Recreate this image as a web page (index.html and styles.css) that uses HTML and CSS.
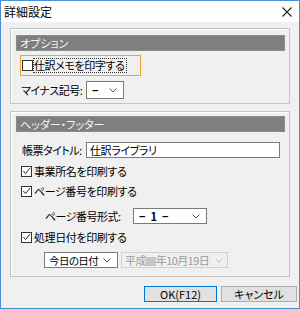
FILE: index.html
```html
<!DOCTYPE html>
<html lang="ja">

<head>
    <title>詳細設定</title>
    <meta charset="utf-8">
    <link rel="stylesheet" href="styles.css">
</head>

<body>
<div class="window">
    <div class="titlebar">
        <span class="title">詳細設定</span>
        <svg class="close" width="10" height="10" viewBox="0 0 10 10">
            <path d="M0.5 0.5 L9.5 9.5 M9.5 0.5 L0.5 9.5" stroke="#222" stroke-width="1.1" fill="none"/>
        </svg>
    </div>

    <div class="client">
        <!-- オプション -->
        <div class="group group-option">
            <div class="bar">オプション</div>
            <div class="focus-row">
                <span class="check"></span>
                <span class="focus-text">仕訳メモを印字する</span>
            </div>
            <div class="row row-minus">
                <span class="label lbl-minus">マイナス記号:</span>
                <div class="select sel-minus">
                    <span class="dash">−</span>
                    <svg class="chev" width="8" height="5" viewBox="0 0 8 5"><path d="M0.5 0.5 L4 4 L7.5 0.5" stroke="#555" fill="none"/></svg>
                </div>
            </div>
        </div>

        <!-- ヘッダー・フッター -->
        <div class="group group-header">
            <div class="bar">ヘッダー・フッター</div>
            <div class="row row-title">
                <span class="label lbl-title">帳票タイトル:</span>
                <div class="textbox">仕訳ライブラリ</div>
            </div>
            <div class="check-row first">
                <span class="check checked"><svg width="10" height="10" viewBox="0 0 10 10"><path d="M1.5 5 L4 7.8 L8.8 1.8" stroke="#222" stroke-width="1.1" fill="none"/></svg></span>
                <span>事業所名を印刷する</span>
            </div>
            <div class="check-row">
                <span class="check checked"><svg width="10" height="10" viewBox="0 0 10 10"><path d="M1.5 5 L4 7.8 L8.8 1.8" stroke="#222" stroke-width="1.1" fill="none"/></svg></span>
                <span>ページ番号を印刷する</span>
            </div>
            <div class="row row-page">
                <span class="label lbl-page">ページ番号形式:</span>
                <div class="select sel-page">
                    <span class="dash">−&nbsp;&nbsp;1&nbsp;&nbsp;−</span>
                    <svg class="chev" width="8" height="5" viewBox="0 0 8 5"><path d="M0.5 0.5 L4 4 L7.5 0.5" stroke="#555" fill="none"/></svg>
                </div>
            </div>
            <div class="check-row third">
                <span class="check checked"><svg width="10" height="10" viewBox="0 0 10 10"><path d="M1.5 5 L4 7.8 L8.8 1.8" stroke="#222" stroke-width="1.1" fill="none"/></svg></span>
                <span>処理日付を印刷する</span>
            </div>
            <div class="row row-date">
                <div class="select sel-day">
                    <span class="day-text">今日の日付</span>
                    <svg class="chev" width="8" height="5" viewBox="0 0 8 5"><path d="M0.5 0.5 L4 4 L7.5 0.5" stroke="#555" fill="none"/></svg>
                </div>
                <div class="select sel-date disabled">
                    <span class="date-text">平成<i class="blank"></i>年10月19日</span>
                    <span class="pad"></span>
                    <svg class="chev" width="8" height="5" viewBox="0 0 8 5"><path d="M0.5 0.5 L4 4 L7.5 0.5" stroke="#bbb" fill="none"/></svg>
                </div>
            </div>
        </div>

        <div class="buttons">
            <button class="btn btn-ok">OK(F12)</button>
            <button class="btn btn-cancel">キャンセル</button>
        </div>
    </div>
</div>
</body>

</html>
```

FILE: styles.css
```css
html, body {
    margin: 0;
    padding: 0;
    background-color: #f0f0f0;
}

body {
    font-family: "Noto Sans CJK JP", "Noto Sans", sans-serif;
    font-size: 11px;
    font-feature-settings: "palt";
    color: #000;
    white-space: nowrap;
}

.window {
    box-sizing: border-box;
    width: 300px;
    height: 309px;
    border: 1px solid #4a90d9;
    background-color: #f0f0f0;
    display: flex;
    flex-direction: column;
}

.titlebar {
    height: 21px;
    background-color: #fff;
    display: flex;
    align-items: center;
    justify-content: space-between;
    padding: 0 7px 0 3px;
}

.title {
    font-size: 12px;
}

.client {
    padding-top: 6px;
}

.group {
    box-sizing: border-box;
    margin: 0 9px;
    border: 1px solid #c3c3c3;
    box-shadow: inset 1px 1px 0 #fff;
    padding: 6px 4px 0 5px;
}

.group-option {
    height: 76px;
}

.group-header {
    height: 166px;
    margin-top: 7px;
    padding-top: 4px;
}

.bar {
    height: 16px;
    line-height: 15px;
    background-color: #7f7f7f;
    border: 1px solid #8c8c8c;
    box-sizing: border-box;
    color: #f4f4f4;
    padding-left: 3px;
}

.row {
    display: flex;
    align-items: center;
}

.label {
    flex: none;
    letter-spacing: -0.5px;
}

.lbl-minus {
    width: 65px;
}

.lbl-title {
    width: 64px;
}

.lbl-page {
    width: 88px;
}

.focus-row {
    box-sizing: border-box;
    width: 121px;
    height: 21px;
    margin: 4px 0 0 4px;
    border: 1px solid #f5a030;
    display: flex;
    align-items: center;
    padding-left: 1px;
}

.focus-text {
    outline: 1px dotted #333;
    line-height: 13px;
    margin-left: 1px;
    padding-right: 2px;
    letter-spacing: -0.4px;
}

.check {
    flex: none;
    box-sizing: border-box;
    width: 11px;
    height: 11px;
    border: 1px solid #333;
    background-color: #fff;
    display: inline-flex;
    align-items: center;
    justify-content: center;
}

.row-minus {
    height: 18px;
    margin: 5px 0 0 5px;
}

.select {
    flex: none;
    box-sizing: border-box;
    height: 100%;
    border: 1px solid #7a7a7a;
    background-color: #fff;
    display: flex;
    align-items: center;
    justify-content: space-between;
    padding: 0 6px 0 5px;
    overflow: hidden;
}

.dash {
    font-weight: bold;
}

.sel-minus {
    width: 38px;
}

.chev {
    flex: none;
}

.row-title {
    height: 16px;
    margin: 10px 0 0 6px;
}

.textbox {
    flex: none;
    box-sizing: border-box;
    width: 194px;
    height: 16px;
    border: 1px solid #7a7a7a;
    background-color: #fff;
    line-height: 14px;
    padding-left: 3px;
    letter-spacing: -0.4px;
}

.check-row {
    height: 20px;
    display: flex;
    align-items: center;
    margin-left: 5px;
    letter-spacing: -0.4px;
}

.check-row .check {
    margin-right: 2px;
}

.check-row.first {
    margin-top: 3px;
}

.check-row.third {
    margin-top: 3px;
}

.row-page {
    height: 16px;
    margin: 7px 0 0 29px;
}

.sel-page {
    width: 74px;
}

.row-date {
    height: 16px;
    margin: 5px 0 0 28px;
}

.sel-day {
    width: 74px;
    padding-left: 4px;
}

.day-text {
    font-size: 10.5px;
    letter-spacing: -0.6px;
}

.sel-date {
    width: 107px;
    margin-left: 3px;
    padding-left: 3px;
    padding-right: 4px;
}

.date-text {
    letter-spacing: -0.6px;
}

.disabled {
    background-color: #f0f0f0;
    border-color: #cfcfcf;
    color: #9a9a9a;
}

.disabled .pad {
    flex: 1;
    align-self: stretch;
    margin: 2px 4px 2px 1px;
    background-color: #e6e6e6;
}

.blank {
    display: inline-block;
    width: 10px;
    height: 9px;
    background-color: #c6c6c6;
    vertical-align: -1px;
}

.buttons {
    display: flex;
    justify-content: flex-end;
    gap: 4px;
    margin-top: 9px;
    padding-right: 2px;
}

.btn {
    box-sizing: border-box;
    height: 16px;
    padding: 0;
    font-family: "Noto Sans CJK JP", "Noto Sans", sans-serif;
    font-size: 11px;
    font-feature-settings: "palt";
    line-height: 14px;
    background-color: #e1e1e1;
    border: 1px solid #adadad;
    color: #000;
}

.btn-ok {
    width: 73px;
    border-color: #0078d7;
}

.btn-cancel {
    width: 76px;
}
```
